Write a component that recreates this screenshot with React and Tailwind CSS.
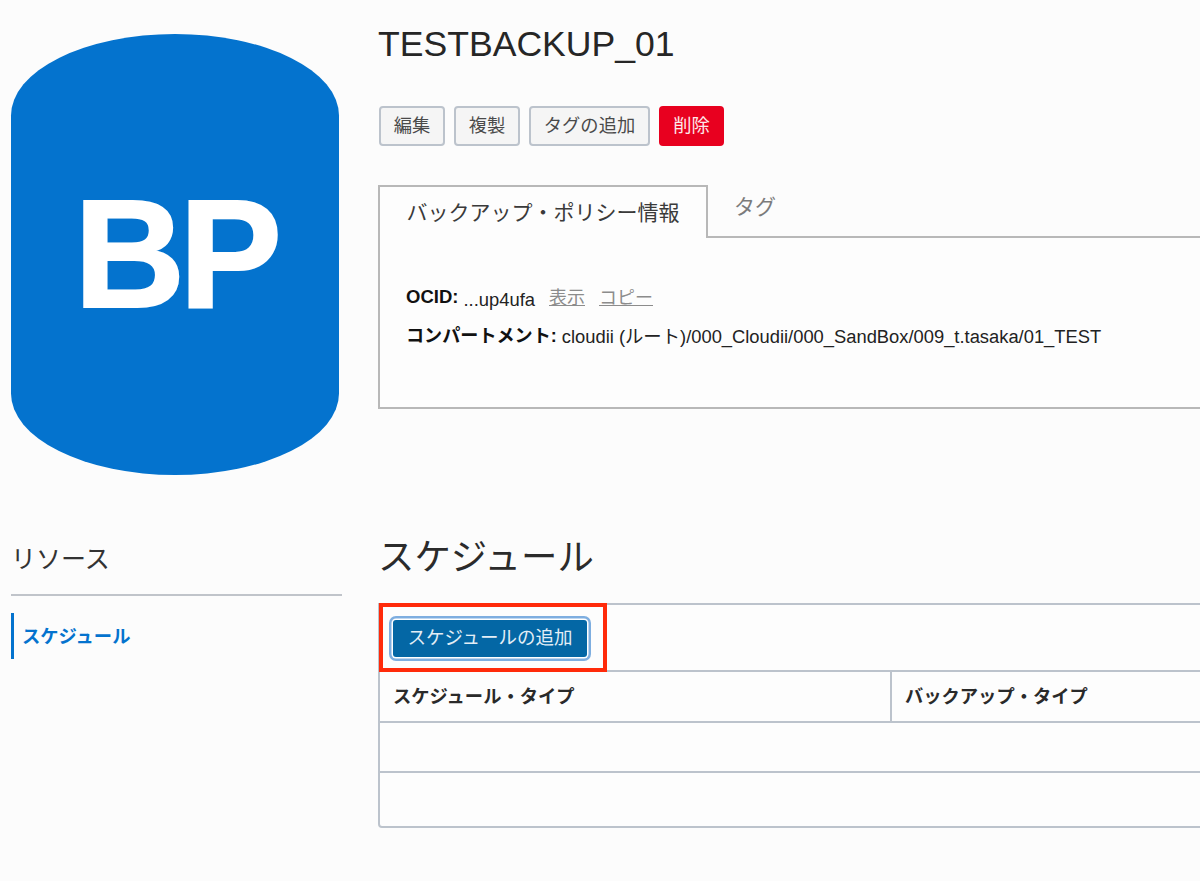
const font = { fontFamily: '"Liberation Sans", "Noto Sans CJK JP", sans-serif' };

const ActionButton = ({ label, width, danger }) => (
  <button
    className={
      danger
        ? "h-10 rounded bg-[#e8001f] text-[18.3px] text-[#fde8ea]"
        : "h-10 rounded border-2 border-[#bcc3cc] bg-[#f5f5f5] text-[18.3px] text-[#4a4a4a]"
    }
    style={{ width }}
  >
    {label}
  </button>
);

const App = () => {
  return (
    <div className="h-[881px] w-[1200px] overflow-hidden bg-[#fcfcfc] text-[#222]" style={font}>
      {/* TOP */}
      <div className="flex pl-[11px] pt-[34px]">
        <div className="flex h-[441px] w-[328px] shrink-0 items-center justify-center rounded-[50%/18.5%] bg-[#0473ce]">
          <span className="mt-[-2px] text-[154px] leading-none font-bold tracking-[-6px] text-white [-webkit-text-stroke:2px_white]">BP</span>
        </div>

        <div className="ml-[39px] min-w-0 flex-1">
          <h1 className="mt-[-14px] text-[35.6px] leading-[48px] text-[#262626]">TESTBACKUP_01</h1>

          <div className="mt-[38px] flex gap-[9px] pl-[1px]">
            <ActionButton label="編集" width={66} />
            <ActionButton label="複製" width={66} />
            <ActionButton label="タグの追加" width={121} />
            <ActionButton label="削除" width={65} danger />
          </div>

          <div className="mt-[39px] flex h-[51px] items-stretch">
            <div className="z-10 mb-[-2px] flex w-[330px] items-center justify-center border-2 border-b-0 border-[#b8b8b8] bg-[#fdfdfd] text-[21px] text-[#3a3a3a]">
              バックアップ・ポリシー情報
            </div>
            <div className="ml-[26px] pt-[6px] text-[21px] text-[#7b7b7b]">タグ</div>
          </div>

          <div className="h-[173px] w-[900px] border-2 border-[#b8b8b8] bg-[#fdfdfd] pl-[26px] pt-[45px] text-[18px]">
            <div className="flex h-[30px] items-center">
              <b className="mt-[-2px] text-[18.5px] text-[#111]">OCID:</b>
              <span className="ml-[5px] mt-[3px] text-[18.4px]">...up4ufa</span>
              <a className="ml-[14px] text-[#8c8c8c] underline">表示</a>
              <a className="ml-[14px] text-[#8c8c8c] underline">コピー</a>
            </div>
            <div className="mt-[9px] flex h-[30px] items-center">
              <b className="text-[18.1px] text-[#111]">コンパートメント:</b>
              <span className="ml-[5px] text-[18.35px]">cloudii (ルート)/000_Cloudii/000_SandBox/009_t.tasaka/01_TEST</span>
            </div>
          </div>
        </div>
      </div>

      {/* RESOURCES + SCHEDULE */}
      <div className="mt-[52px] flex pl-[11px]">
        <div className="w-[331px] shrink-0">
          <div className="h-[69px] border-b-2 border-[#c0c4ca] pt-[14px] text-[25px] leading-[37px] text-[#333]">
            リソース
          </div>
          <div className="mt-[17px] flex h-[46px] items-center border-l-[3px] border-[#0473ce] pl-[8px] pt-[2px] text-[18.3px] font-bold text-[#0473ce]">
            スケジュール
          </div>
        </div>

        <div className="ml-[36px] min-w-0 flex-1">
          <h2 className="h-[76px] pt-[4px] text-[36.4px] leading-[54px] text-[#2b2b2b]">スケジュール</h2>

          <div className="relative h-[225px] w-[900px] rounded-bl border-2 border-[#bcc3cc] bg-[#fdfdfd]">
            <div className="flex h-[67px] items-center border-b-2 border-[#bcc3cc] pl-[13px]">
              <button className="mt-[1px] h-[37px] w-[194px] rounded-[3px] bg-[#0467a5] text-[18.5px] text-[#e3eef6] shadow-[0_0_0_1.5px_#ffffff,0_0_0_4px_#7eaee0]">
                スケジュールの追加
              </button>
            </div>
            <div className="flex h-[51px] border-b-2 border-[#bcc3cc] text-[18.3px] font-bold text-[#2a2a2a]">
              <div className="flex w-[512px] items-center border-r-2 border-[#bcc3cc] pl-[13px] pt-[1px]">スケジュール・タイプ</div>
              <div className="flex items-center pl-[13px] pt-[1px]">バックアップ・タイプ</div>
            </div>
            <div className="h-[50px] border-b-2 border-[#bcc3cc]"></div>

            {/* red annotation */}
            <div className="absolute left-[-1px] top-[-2px] h-[69px] w-[228px] border-4 border-[#ff2a0a]"></div>
          </div>
        </div>
      </div>
    </div>
  );
};

export default App;
